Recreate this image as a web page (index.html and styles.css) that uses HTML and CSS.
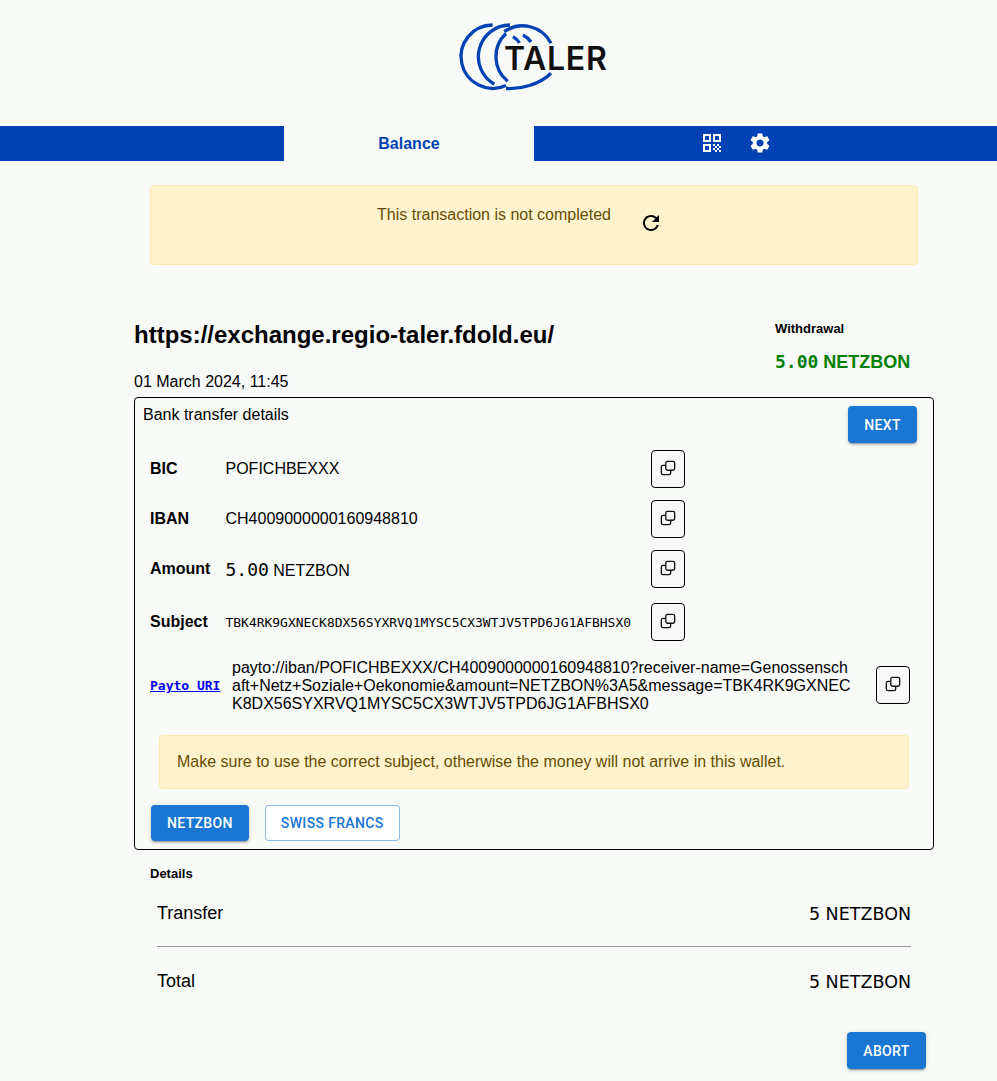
FILE: index.html
```html
<!DOCTYPE html>
<html>
<head>
  <title>GNU Taler Wallet</title>
  <link rel="stylesheet" href="styles.css">
</head>

<body>
  <div class="logo-row">
    <svg class="logo" width="150" height="70" viewBox="0 0 150 70">
      <g fill="none" stroke="#0042b3" stroke-width="3.3">
        <path d="M32.700 3A31.700 31.700 0 1 0 46 63.500"/>
        <path d="M50 3A31.700 31.700 0 0 0 34.300 62.200"/>
        <path d="M44.300 9.700A31.700 31.700 0 0 1 91 21.300"/>
        <path d="M46 11.500A31.700 31.700 0 0 0 47.700 59.300"/>
        <path d="M46 66.500C62 67.500 80 62 91 51.300"/>
        <path d="M53 14.700C56 16.500 58 18.500 59.500 21"/>
        <path d="M63 13C66 14.500 69 17 71 20"/>
      </g>
      <text x="44" y="47.500" class="logo-text">TALER</text>
    </svg>
  </div>

  <div class="nav">
    <div class="nav-left"></div>
    <div class="nav-tab">Balance</div>
    <div class="nav-icons">
      <svg class="nav-qr" width="24" height="24" viewBox="0 0 24 24" fill="#fff"><path d="M3 11h8V3H3v8zm2-6h4v4H5V5zM3 21h8v-8H3v8zm2-6h4v4H5v-4zM13 3v8h8V3h-8zm6 6h-4V5h4v4zM13 13h2v2h-2zM15 15h2v2h-2zM13 17h2v2h-2zM15 19h2v2h-2zM17 17h2v2h-2zM17 13h2v2h-2zM19 15h2v2h-2zM19 19h2v2h-2z"/></svg>
      <svg width="24" height="24" viewBox="0 0 24 24" fill="#fff"><path d="M19.14 12.94c.04-.3.06-.61.06-.94 0-.32-.02-.64-.07-.94l2.03-1.58c.18-.14.23-.41.12-.61l-1.92-3.32c-.12-.22-.37-.29-.59-.22l-2.39.96c-.5-.38-1.03-.7-1.62-.94l-.36-2.54c-.04-.24-.24-.41-.48-.41h-3.84c-.24 0-.43.17-.47.41l-.36 2.54c-.59.24-1.13.57-1.62.94l-2.39-.96c-.22-.08-.47 0-.59.22L2.74 8.87c-.12.21-.08.47.12.61l2.03 1.58c-.05.3-.09.63-.09.94s.02.64.07.94l-2.03 1.58c-.18.14-.23.41-.12.61l1.92 3.32c.12.22.37.29.59.22l2.39-.96c.5.38 1.03.7 1.62.94l.36 2.54c.05.24.24.41.48.41h3.84c.24 0 .44-.17.47-.41l.36-2.54c.59-.24 1.13-.56 1.62-.94l2.39.96c.22.08.47 0 .59-.22l1.92-3.32c.12-.22.07-.47-.12-.61l-2.01-1.58zM12 15.600c-1.980 0-3.600-1.620-3.600-3.600s1.620-3.600 3.600-3.600 3.600 1.620 3.600 3.600-1.620 3.600-3.600 3.600z"/></svg>
    </div>
  </div>

  <div class="page">
    <div class="alert alert-top">
      <span>This transaction is not completed</span>
      <svg class="refresh" width="24" height="24" viewBox="0 0 24 24" fill="#000"><path d="M17.650 6.350A7.958 7.958 0 0 0 12 4c-4.420 0-7.990 3.580-7.990 8s3.570 8 7.990 8c3.730 0 6.840-2.550 7.730-6h-2.080A5.990 5.990 0 0 1 12 18c-3.310 0-6-2.690-6-6s2.690-6 6-6c1.660 0 3.140.69 4.220 1.780L13 11h7V4l-2.350 2.350z"/></svg>
    </div>

    <div class="header">
      <div class="title">https://exchange.regio-taler.fdold.eu/</div>
      <div class="summary">
        <div class="summary-label">Withdrawal</div>
        <div class="summary-amount"><span class="mono">5.00</span> NETZBON</div>
      </div>
    </div>
    <div class="date">01 March 2024, 11:45</div>

    <div class="box">
      <div class="box-head">
        <span>Bank transfer details</span>
        <button class="btn btn-solid btn-next">NEXT</button>
      </div>

      <div class="row row-bic">
        <div class="row-label">BIC</div>
        <div class="row-value">POFICHBEXXX</div>
        <button class="copy"><svg width="16" height="16" viewBox="0 0 18 18" fill="none" stroke="#111" stroke-width="1.500"><rect x="6.500" y="1.500" width="10" height="10" rx="2"/><path d="M6 6H3.500a2 2 0 0 0-2 2v6.500a2 2 0 0 0 2 2H10a2 2 0 0 0 2-2V12"/></svg></button>
      </div>
      <div class="row row-iban">
        <div class="row-label">IBAN</div>
        <div class="row-value">CH4009000000160948810</div>
        <button class="copy"><svg width="16" height="16" viewBox="0 0 18 18" fill="none" stroke="#111" stroke-width="1.500"><rect x="6.500" y="1.500" width="10" height="10" rx="2"/><path d="M6 6H3.500a2 2 0 0 0-2 2v6.500a2 2 0 0 0 2 2H10a2 2 0 0 0 2-2V12"/></svg></button>
      </div>
      <div class="row row-amount">
        <div class="row-label">Amount</div>
        <div class="row-value"><span class="mono amount-num">5.00</span> NETZBON</div>
        <button class="copy"><svg width="16" height="16" viewBox="0 0 18 18" fill="none" stroke="#111" stroke-width="1.500"><rect x="6.500" y="1.500" width="10" height="10" rx="2"/><path d="M6 6H3.500a2 2 0 0 0-2 2v6.500a2 2 0 0 0 2 2H10a2 2 0 0 0 2-2V12"/></svg></button>
      </div>
      <div class="row row-subject">
        <div class="row-label">Subject</div>
        <div class="row-value mono subject">TBK4RK9GXNECK8DX56SYXRVQ1MYSC5CX3WTJV5TPD6JG1AFBHSX0</div>
        <button class="copy"><svg width="16" height="16" viewBox="0 0 18 18" fill="none" stroke="#111" stroke-width="1.500"><rect x="6.500" y="1.500" width="10" height="10" rx="2"/><path d="M6 6H3.500a2 2 0 0 0-2 2v6.500a2 2 0 0 0 2 2H10a2 2 0 0 0 2-2V12"/></svg></button>
      </div>
      <div class="row row-payto">
        <a class="payto-link" href="#">Payto URI</a>
        <div class="payto-value">payto://iban/POFICHBEXXX/CH4009000000160948810?receiver-name=Genossenschaft+Netz+Soziale+Oekonomie&amp;amount=NETZBON%3A5&amp;message=TBK4RK9GXNECK8DX56SYXRVQ1MYSC5CX3WTJV5TPD6JG1AFBHSX0</div>
        <button class="copy copy-payto"><svg width="16" height="16" viewBox="0 0 18 18" fill="none" stroke="#111" stroke-width="1.500"><rect x="6.500" y="1.500" width="10" height="10" rx="2"/><path d="M6 6H3.500a2 2 0 0 0-2 2v6.500a2 2 0 0 0 2 2H10a2 2 0 0 0 2-2V12"/></svg></button>
      </div>

      <div class="alert alert-inner">Make sure to use the correct subject, otherwise the money will not arrive in this wallet.</div>

      <div class="currency-row">
        <button class="btn btn-solid">NETZBON</button>
        <button class="btn btn-outline">SWISS FRANCS</button>
      </div>
    </div>

    <div class="details-label">Details</div>
    <div class="details">
      <div class="detail-row detail-transfer">
        <span>Transfer</span>
        <span class="detail-amount">5 NETZBON</span>
      </div>
      <hr class="divider">
      <div class="detail-row detail-total">
        <span>Total</span>
        <span class="detail-amount">5 NETZBON</span>
      </div>
    </div>

    <div class="footer">
      <button class="btn btn-solid btn-abort">ABORT</button>
    </div>
  </div>
</body>
</html>
```

FILE: styles.css
```css
body {
  background-color: #f8faf8;
  margin: 0;
  padding: 0;
  color: #000;
  font-family: 'Liberation Sans', sans-serif;
  font-size: 16px;
  height: 1081px;
  overflow: hidden;
}

.logo-row {
  display: flex;
  justify-content: center;
  height: 126px;
  padding-left: 72px;
  box-sizing: border-box;
  padding-top: 22px;
}

.logo {
  overflow: visible;
}

.logo-text {
  font-family: 'Inter', sans-serif;
  font-weight: 600;
  font-size: 32px;
  letter-spacing: 0.7px;
  fill: #111;
}

.nav {
  display: flex;
  height: 35px;
  background-color: #0042b3;
}

.nav-left {
  width: 284px;
}

.nav-tab {
  width: 250px;
  background-color: #f8faf8;
  color: #0042b3;
  font-weight: bold;
  text-align: center;
  line-height: 35px;
}

.nav-icons {
  display: flex;
  gap: 24px;
  padding-left: 166px;
  padding-top: 5px;
  height: 30px;
}

.page {
  padding-left: 134px;
  width: 800px;
}

.alert {
  background-color: #fff3cd;
  border: 1px solid #ffe9ae;
  border-radius: 4px;
  color: #664d03;
  box-sizing: border-box;
}

.alert-top {
  display: flex;
  justify-content: center;
  width: 768px;
  height: 80px;
  margin-top: 24px;
  margin-left: 16px;
  padding-top: 20px;
  padding-right: 28px;
  gap: 28px;
}

.refresh {
  margin-top: 5px;
}

.header {
  display: flex;
  justify-content: space-between;
  margin-top: 54px;
}

.title {
  font-size: 24px;
  font-weight: bold;
  line-height: 32px;
}

.summary {
  width: 159px;
  padding-top: 1px;
}

.summary-label {
  font-size: 13px;
  font-weight: bold;
  line-height: 18px;
}

.summary-amount {
  margin-top: 12px;
  font-size: 18px;
  font-weight: bold;
  line-height: 24px;
  color: #008000;
}

.mono {
  font-family: 'DejaVu Sans Mono', monospace;
}

.date {
  margin-top: -1px;
  line-height: 18px;
}

.box {
  margin-top: 6px;
  border: 1px solid #000;
  border-radius: 4px;
  height: 453px;
  box-sizing: border-box;
  padding-left: 8px;
}

.box-head {
  display: flex;
  justify-content: space-between;
  line-height: 18px;
  padding-top: 8px;
  padding-right: 16px;
}

.btn {
  font-family: 'Roboto', sans-serif;
  font-size: 14px;
  font-weight: 500;
  letter-spacing: 0.35px;
  border-radius: 4px;
  height: 37px;
  cursor: pointer;
}

.btn-solid {
  background-color: #1976d2;
  color: #fff;
  border: none;
  box-shadow: 0 3px 1px -2px rgba(0, 0, 0, 0.2), 0 2px 2px 0 rgba(0, 0, 0, 0.14), 0 1px 5px 0 rgba(0, 0, 0, 0.12);
}

.btn-outline {
  background-color: #fff;
  color: #1976d2;
  border: 1px solid rgba(25, 118, 210, 0.5);
}

.btn-next {
  width: 69px;
}

.row {
  display: flex;
  align-items: center;
  padding-left: 7px;
}

.row-label {
  font-weight: bold;
  width: 75.5px;
}

.row-value {
  width: 425.5px;
}

.amount-num {
  font-size: 18px;
}

.subject {
  font-size: 12.96px;
}

.row-bic {
  margin-top: 7px;
}

.row-iban {
  margin-top: 12px;
}

.row-amount {
  margin-top: 12px;
}

.row-subject {
  margin-top: 15px;
}

.row-payto {
  margin-top: 18px;
  padding-right: 23px;
}

.payto-link {
  font-family: 'DejaVu Sans Mono', monospace;
  font-size: 13px;
  font-weight: bold;
  color: #0000ee;
  width: 82px;
  flex-shrink: 0;
  margin-bottom: 2px;
}

.payto-value {
  width: 620px;
  line-height: 18px;
  word-break: break-all;
}

.copy {
  width: 34px;
  height: 38px;
  padding: 0 0 3px;
  border: 1px solid #000;
  border-radius: 4px;
  background-color: #f8f8f8;
  display: flex;
  align-items: center;
  justify-content: center;
  flex-shrink: 0;
}

.copy-payto {
  margin-left: auto;
  margin-bottom: 2px;
}

.alert-inner {
  width: 750px;
  height: 54px;
  margin-top: 22px;
  margin-left: 16px;
  padding: 0 17px;
  line-height: 52px;
}

.currency-row {
  display: flex;
  gap: 16px;
  margin-top: 16px;
  padding-left: 8px;
}

.currency-row .btn {
  padding: 0 16px;
  height: 36px;
}

.currency-row .btn-outline {
  padding: 0 15px;
}

.details-label {
  margin-top: 16px;
  margin-left: 16px;
  font-size: 13px;
  font-weight: bold;
  line-height: 16px;
}

.details {
  margin-left: 23px;
  width: 754px;
}

.detail-row {
  display: flex;
  justify-content: space-between;
  font-size: 18px;
  line-height: 24px;
}

.detail-transfer {
  margin-top: 19px;
}

.detail-total {
  margin-top: 22px;
}

.detail-amount {
  font-family: 'DejaVu Sans', sans-serif;
  font-size: 17.5px;
  margin-top: 1px;
}

.divider {
  margin: 20px 0 0;
  border: none;
  border-top: 1px solid #999;
}

.footer {
  display: flex;
  justify-content: flex-end;
  margin-top: 38px;
  width: 792px;
}

.btn-abort {
  width: 79px;
}
```
